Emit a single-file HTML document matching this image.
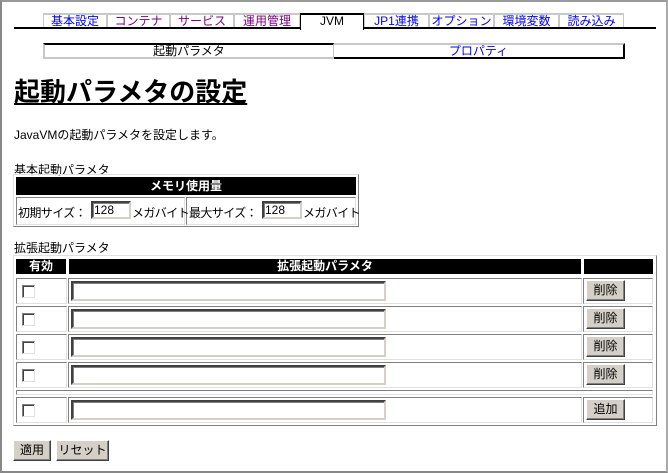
<!DOCTYPE html>
<html><head><meta charset="utf-8"><style>
*{box-sizing:border-box;margin:0;padding:0}
body{width:668px;height:473px;position:relative;overflow:hidden;background:#fff;font-family:"Liberation Sans","Noto Sans CJK JP",sans-serif;font-size:12px;color:#000}
.a{position:absolute}
.frame{left:0;top:0;width:668px;height:473px;border:2px solid #888;border-top-color:#999;border-right-color:#aaa}
.tab{position:absolute;top:13px;height:15px;border-top:2px solid #c8c8c8;border-left:1px solid #c8c8c8;border-right:1px solid #c8c8c8;text-align:center;line-height:13px;font-size:12px;color:#00f}
.v{color:#800080}
.btn{position:absolute;background:#d4d0c8;border:1px solid;border-color:#fff #404040 #404040 #fff;box-shadow:inset -1px -1px #808080;text-align:center;font-size:12px;line-height:18px}
.cell{position:absolute;border:1px solid;border-color:#808080 #e0e0e0 #e0e0e0 #808080}
.hdr{position:absolute;background:#000;color:#fff;font-weight:bold;text-align:center;line-height:15px;font-size:12px}
.inp{position:absolute;background:#fff;border:2px solid;border-color:#404040 #d4d0c8 #d4d0c8 #404040;box-shadow:inset 1px 1px #808080;font-size:12px;line-height:14px;padding-left:1px}
.cb{position:absolute;width:13px;height:13px;border:1px solid;border-color:#808080 #e0e0e0 #e0e0e0 #808080;box-shadow:inset 1px 1px #404040;background:#fff}
.tbl{position:absolute;border:1px solid;border-color:#e0e0e0 #808080 #808080 #e0e0e0}
.mb{letter-spacing:-0.6px}
</style></head><body>
<div class="a frame"></div>
<div class="tab" style="left:43px;width:64px">基本設定</div>
<div class="tab v" style="left:107px;width:63px">コンテナ</div>
<div class="tab v" style="left:170px;width:64px">サービス</div>
<div class="tab v" style="left:234px;width:66px">運用管理</div>
<div class="tab" style="left:300px;width:64px;border:none;border-top:2px solid #000;border-left:1px solid #000;border-right:1px solid #000;color:#000;height:17px">JVM</div>
<div class="tab" style="left:364px;width:65px">JP1連携</div>
<div class="tab" style="left:429px;width:65px">オプション</div>
<div class="tab" style="left:494px;width:65px">環境変数</div>
<div class="tab" style="left:559px;width:65px">読み込み</div>
<div class="a" style="left:14px;top:27px;width:286px;height:2px;background:#000"></div>
<div class="a" style="left:364px;top:27px;width:292px;height:2px;background:#000"></div>

<div class="a" style="left:43px;top:43px;width:291px;height:16px;border-top:2px solid #000;border-left:2px solid #c8c8c8;border-bottom:2px solid #c8c8c8;border-right:1px solid #c8c8c8;text-align:center;line-height:12px">起動パラメタ</div>
<div class="a" style="left:334px;top:43px;width:291px;height:16px;border-top:2px solid #c8c8c8;border-bottom:2px solid #000;border-right:2px solid #000;text-align:center;line-height:12px;color:#00f">プロパティ</div>

<div class="a" style="left:14px;top:78px;font-size:26px;font-weight:bold;line-height:28px;text-decoration:underline;text-underline-offset:2px">起動パラメタの設定</div>
<div class="a" style="left:14px;top:126px">JavaVMの起動パラメタを設定します。</div>
<div class="a" style="left:14px;top:161px">基本起動パラメタ</div>

<div class="tbl" style="left:13px;top:174px;width:346px;height:53px"></div>
<div class="hdr" style="left:16px;top:177px;width:340px;height:18px;line-height:18px">メモリ使用量</div>
<div class="cell" style="left:16px;top:197px;width:169px;height:28px"></div>
<div class="cell" style="left:186px;top:197px;width:170px;height:28px"></div>
<div class="a mb" style="left:18px;top:204px">初期サイズ：</div>
<div class="inp" style="left:91px;top:201px;width:40px;height:18px">128</div>
<div class="a mb" style="left:132px;top:204px">メガバイト</div>
<div class="a mb" style="left:189px;top:204px">最大サイズ：</div>
<div class="inp" style="left:262px;top:201px;width:40px;height:18px">128</div>
<div class="a mb" style="left:303px;top:204px">メガバイト</div>

<div class="a" style="left:14px;top:239px">拡張起動パラメタ</div>
<div class="tbl" style="left:13px;top:255px;width:644px;height:171px"></div>
<div class="hdr" style="left:16px;top:259px;width:50px;height:15px">有効</div>
<div class="hdr" style="left:69px;top:259px;width:512px;height:15px">拡張起動パラメタ</div>
<div class="hdr" style="left:584px;top:259px;width:69px;height:15px"></div>

<div class="cell" style="left:16px;top:278px;width:51px;height:26px"></div><div class="cell" style="left:68px;top:278px;width:514px;height:26px"></div><div class="cell" style="left:583px;top:278px;width:70px;height:26px"></div>
<div class="cb" style="left:22px;top:285px"></div><div class="inp" style="left:71px;top:281px;width:315px;height:20px"></div><div class="btn" style="left:586px;top:280px;width:39px;height:21px">削除</div>

<div class="cell" style="left:16px;top:306px;width:51px;height:26px"></div><div class="cell" style="left:68px;top:306px;width:514px;height:26px"></div><div class="cell" style="left:583px;top:306px;width:70px;height:26px"></div>
<div class="cb" style="left:22px;top:313px"></div><div class="inp" style="left:71px;top:309px;width:315px;height:20px"></div><div class="btn" style="left:586px;top:308px;width:39px;height:21px">削除</div>

<div class="cell" style="left:16px;top:334px;width:51px;height:26px"></div><div class="cell" style="left:68px;top:334px;width:514px;height:26px"></div><div class="cell" style="left:583px;top:334px;width:70px;height:26px"></div>
<div class="cb" style="left:22px;top:341px"></div><div class="inp" style="left:71px;top:337px;width:315px;height:20px"></div><div class="btn" style="left:586px;top:336px;width:39px;height:21px">削除</div>

<div class="cell" style="left:16px;top:362px;width:51px;height:26px"></div><div class="cell" style="left:68px;top:362px;width:514px;height:26px"></div><div class="cell" style="left:583px;top:362px;width:70px;height:26px"></div>
<div class="cb" style="left:22px;top:369px"></div><div class="inp" style="left:71px;top:365px;width:315px;height:20px"></div><div class="btn" style="left:586px;top:364px;width:39px;height:21px">削除</div>

<div class="cell" style="left:16px;top:390px;width:637px;height:5px"></div>

<div class="cell" style="left:16px;top:397px;width:51px;height:26px"></div><div class="cell" style="left:68px;top:397px;width:514px;height:26px"></div><div class="cell" style="left:583px;top:397px;width:70px;height:26px"></div>
<div class="cb" style="left:22px;top:404px"></div><div class="inp" style="left:71px;top:400px;width:315px;height:20px"></div><div class="btn" style="left:586px;top:399px;width:39px;height:21px">追加</div>

<div class="btn" style="left:13px;top:440px;width:38px;height:21px">適用</div>
<div class="btn" style="left:56px;top:440px;width:53px;height:21px">リセット</div>
</body></html>
